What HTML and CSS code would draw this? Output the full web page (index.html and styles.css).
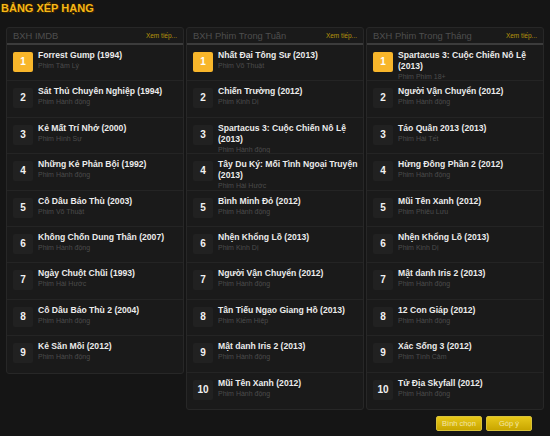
FILE: index.html
```html
<!DOCTYPE html>
<html lang="vi">
<head>
<meta charset="utf-8">
<title>Bảng xếp hạng</title>
<link rel="stylesheet" href="styles.css">
</head>
<body>
<div class="page">
  <h1 class="page-title">BẢNG XẾP HẠNG</h1>
  <div class="columns">
    <section class="panel">
      <div class="panel-head"><span class="panel-name">BXH IMDB</span><a class="more">Xem tiếp...</a></div>
      <ul class="list">
        <li class="row"><span class="num top">1</span><div class="info"><div class="name">Forrest Gump (1994)</div><div class="genre">Phim Tâm Lý</div></div></li>
        <li class="row"><span class="num">2</span><div class="info"><div class="name">Sát Thủ Chuyên Nghiệp (1994)</div><div class="genre">Phim Hành động</div></div></li>
        <li class="row"><span class="num">3</span><div class="info"><div class="name">Kẻ Mất Trí Nhớ (2000)</div><div class="genre">Phim Hình Sự</div></div></li>
        <li class="row"><span class="num">4</span><div class="info"><div class="name">Những Kẻ Phản Bội (1992)</div><div class="genre">Phim Hành động</div></div></li>
        <li class="row"><span class="num">5</span><div class="info"><div class="name">Cô Dâu Báo Thù (2003)</div><div class="genre">Phim Võ Thuật</div></div></li>
        <li class="row"><span class="num">6</span><div class="info"><div class="name">Không Chốn Dung Thân (2007)</div><div class="genre">Phim Hành động</div></div></li>
        <li class="row"><span class="num">7</span><div class="info"><div class="name">Ngày Chuột Chũi (1993)</div><div class="genre">Phim Hài Hước</div></div></li>
        <li class="row"><span class="num">8</span><div class="info"><div class="name">Cô Dâu Báo Thù 2 (2004)</div><div class="genre">Phim Hành động</div></div></li>
        <li class="row"><span class="num">9</span><div class="info"><div class="name">Kẻ Săn Mồi (2012)</div><div class="genre">Phim Hành động</div></div></li>
      </ul>
    </section>
    <section class="panel">
      <div class="panel-head"><span class="panel-name">BXH Phim Trong Tuần</span><a class="more">Xem tiếp...</a></div>
      <ul class="list">
        <li class="row"><span class="num top">1</span><div class="info"><div class="name">Nhất Đại Tông Sư (2013)</div><div class="genre">Phim Võ Thuật</div></div></li>
        <li class="row"><span class="num">2</span><div class="info"><div class="name">Chiến Trường (2012)</div><div class="genre">Phim Kinh Dị</div></div></li>
        <li class="row"><span class="num">3</span><div class="info"><div class="name">Spartacus 3: Cuộc Chiến Nô Lệ<br>(2013)</div><div class="genre">Phim Hành động</div></div></li>
        <li class="row"><span class="num">4</span><div class="info"><div class="name">Tây Du Ký: Mối Tình Ngoại Truyện<br>(2013)</div><div class="genre">Phim Hài Hước</div></div></li>
        <li class="row"><span class="num">5</span><div class="info"><div class="name">Bình Minh Đỏ (2012)</div><div class="genre">Phim Hành động</div></div></li>
        <li class="row"><span class="num">6</span><div class="info"><div class="name">Nhện Khổng Lồ (2013)</div><div class="genre">Phim Kinh Dị</div></div></li>
        <li class="row"><span class="num">7</span><div class="info"><div class="name">Người Vận Chuyển (2012)</div><div class="genre">Phim Hành động</div></div></li>
        <li class="row"><span class="num">8</span><div class="info"><div class="name">Tân Tiếu Ngạo Giang Hồ (2013)</div><div class="genre">Phim Kiếm Hiệp</div></div></li>
        <li class="row"><span class="num">9</span><div class="info"><div class="name">Mật danh Iris 2 (2013)</div><div class="genre">Phim Hành động</div></div></li>
        <li class="row"><span class="num">10</span><div class="info"><div class="name">Mũi Tên Xanh (2012)</div><div class="genre">Phim Hành động</div></div></li>
      </ul>
    </section>
    <section class="panel">
      <div class="panel-head"><span class="panel-name">BXH Phim Trong Tháng</span><a class="more">Xem tiếp...</a></div>
      <ul class="list">
        <li class="row"><span class="num top">1</span><div class="info"><div class="name">Spartacus 3: Cuộc Chiến Nô Lệ<br>(2013)</div><div class="genre">Phim Phim 18+</div></div></li>
        <li class="row"><span class="num">2</span><div class="info"><div class="name">Người Vận Chuyển (2012)</div><div class="genre">Phim Hành động</div></div></li>
        <li class="row"><span class="num">3</span><div class="info"><div class="name">Táo Quân 2013 (2013)</div><div class="genre">Phim Hài Tết</div></div></li>
        <li class="row"><span class="num">4</span><div class="info"><div class="name">Hừng Đông Phần 2 (2012)</div><div class="genre">Phim Hành động</div></div></li>
        <li class="row"><span class="num">5</span><div class="info"><div class="name">Mũi Tên Xanh (2012)</div><div class="genre">Phim Phiêu Lưu</div></div></li>
        <li class="row"><span class="num">6</span><div class="info"><div class="name">Nhện Khổng Lồ (2013)</div><div class="genre">Phim Kinh Dị</div></div></li>
        <li class="row"><span class="num">7</span><div class="info"><div class="name">Mật danh Iris 2 (2013)</div><div class="genre">Phim Hành động</div></div></li>
        <li class="row"><span class="num">8</span><div class="info"><div class="name">12 Con Giáp (2012)</div><div class="genre">Phim Hành động</div></div></li>
        <li class="row"><span class="num">9</span><div class="info"><div class="name">Xác Sống 3 (2012)</div><div class="genre">Phim Tình Cảm</div></div></li>
        <li class="row"><span class="num">10</span><div class="info"><div class="name">Tử Địa Skyfall (2012)</div><div class="genre">Phim Hành động</div></div></li>
      </ul>
    </section>
  </div>
  <div class="actions">
    <button class="btn">Bình chọn</button>
    <button class="btn">Góp ý</button>
  </div>
</div>
</body>
</html>
```
FILE: styles.css
```css
html, body {
  margin: 0;
  padding: 0;
  background: #151515;
  width: 550px;
  height: 436px;
  overflow: hidden;
}
.page {
  font-family: "Liberation Sans", Arial, sans-serif;
  padding: 0 6px 0 6px;
}
.page-title {
  margin: 0 0 0 -5px;
  height: 27px;
  font-family: "Liberation Sans Narrow", "Liberation Sans", sans-serif;
  font-weight: bold;
  font-size: 11px;
  line-height: 17px;
  color: #f7b818;
  letter-spacing: 0;
  text-shadow: 1px 1px 0 #3a2600, -1px 0 0 #2a1c00, 0 -1px 0 #2a1c00;
}
.columns {
  display: grid;
  grid-template-columns: 178px 178px 178px;
  gap: 2px;
  align-items: start;
}
.panel {
  background: #1a1a1a;
  border: 1px solid #272727;
  border-radius: 3px;
}
.panel-head {
  height: 15px;
  border-bottom: 2px solid #3c3c3c;
  display: flex;
  align-items: center;
  justify-content: space-between;
  padding: 0 6px 0 6px;
}
.panel-name {
  font-size: 9.4px;
  color: #4e4e4e;
}
.more {
  font-size: 6.5px;
  color: #b8940c;
}
.list {
  list-style: none;
  margin: 0;
  padding: 0;
}
.row {
  box-sizing: border-box;
  height: 36.4px;
  padding: 5px 4px 0 6px;
  display: flex;
  gap: 5px;
  border-bottom: 1px solid #242424;
  overflow: hidden;
}
.row:last-child {
  border-bottom: 0;
}
.num {
  flex: 0 0 20px;
  width: 20px;
  height: 20px;
  margin-top: 2px;
  border-radius: 2px;
  background: #212121;
  color: #f2f2f2;
  font-weight: bold;
  font-size: 10px;
  line-height: 20px;
  text-align: center;
}
.num.top {
  background: #f8b62b;
  color: #fff;
}
.info {
  min-width: 0;
}
.name {
  font-weight: bold;
  font-size: 8.6px;
  line-height: 11px;
  color: #ececec;
  white-space: nowrap;
}
.genre {
  font-size: 7px;
  line-height: 9px;
  color: #4c4c4c;
}
.actions {
  display: flex;
  justify-content: flex-end;
  gap: 4px;
  margin-top: 6px;
  padding-right: 12px;
}
.btn {
  width: 46px;
  height: 15px;
  padding: 0;
  border: 1px solid #d8c23a;
  border-radius: 2px;
  background: linear-gradient(#e8c81a, #c9a600);
  color: #f4e7a8;
  font-family: "Liberation Sans", Arial, sans-serif;
  font-size: 7.5px;
  line-height: 13px;
}
```
